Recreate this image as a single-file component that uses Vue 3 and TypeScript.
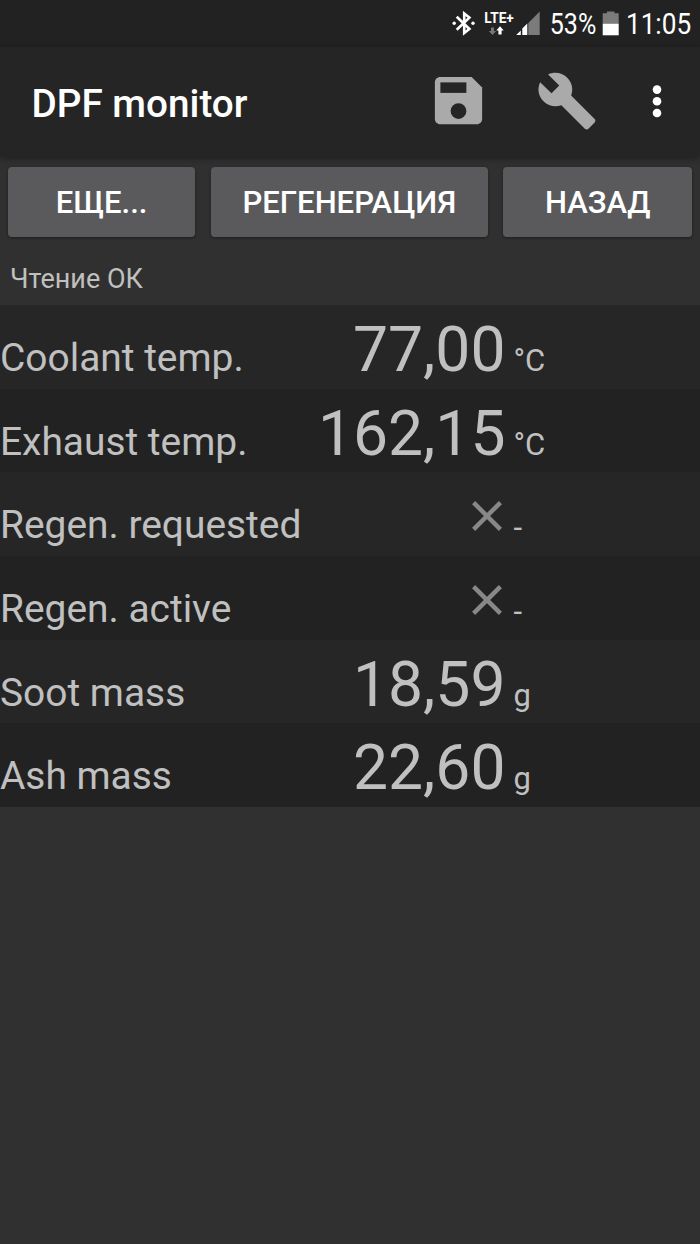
<script setup lang="ts">
interface Reading {
  label: string
  value: string | null
  unit: string
}

const actions: { text: string; kind: string }[] = [
  { text: 'ЕЩЕ...', kind: 'more' },
  { text: 'РЕГЕНЕРАЦИЯ', kind: 'regen' },
  { text: 'НАЗАД', kind: 'back' },
]

const readings: Reading[] = [
  { label: 'Coolant temp.', value: '77,00', unit: '°C' },
  { label: 'Exhaust temp.', value: '162,15', unit: '°C' },
  { label: 'Regen. requested', value: null, unit: '-' },
  { label: 'Regen. active', value: null, unit: '-' },
  { label: 'Soot mass', value: '18,59', unit: 'g' },
  { label: 'Ash mass', value: '22,60', unit: 'g' },
]
</script>

<template>
  <div class="screen">
    <div class="status">
      <svg width="260" height="46" viewBox="0 0 260 46">
        <g fill="none" stroke="#fff" stroke-width="2.6">
          <path d="M16.7 16.8 L29.4 29 L24.2 33 V13.4 L29.4 17.6 L16.7 29.8" />
        </g>
        <circle cx="14.2" cy="23.3" r="1.7" fill="#fff" />
        <circle cx="33" cy="23.3" r="1.7" fill="#fff" />
        <text class="lte" x="44.3" y="22.8" textLength="29.5" lengthAdjust="spacingAndGlyphs">LTE+</text>
        <path d="M51 27.5h3v3.5h2.2l-3.7 4-3.7-4h2.2z" fill="#777" />
        <path d="M60 26.3l3.7 4.2h-2.1v4h-3.2v-4h-2.1z" fill="#fff" />
        <path d="M88.3 35V23l11.4-11.6V35z" fill="#7b7b7b" />
        <path d="M82.3 35V28.4l5-5V35zM76.2 35l4.6-4.6V35z" fill="#fff" />
        <text class="num" x="109.8" y="34.2" textLength="46.5" lengthAdjust="spacingAndGlyphs">53%</text>
        <path d="M162.7 13.2h4.2v-1.6h7.6v1.6h4.2v11h-16z" fill="#7b7b7b" />
        <path d="M162.7 23.8h16V35.3h-16z" fill="#fff" />
        <text class="num" x="185.9" y="34.2" textLength="65.3" lengthAdjust="spacingAndGlyphs">11:05</text>
      </svg>
    </div>
    <header class="bar">
      <h1 class="title">DPF monitor</h1>
      <svg class="save" width="63" height="63" viewBox="0 0 24 24">
        <path fill="#aaa" d="M17 3H5c-1.11 0-2 .9-2 2v14c0 1.1.89 2 2 2h14c1.1 0 2-.9 2-2V7l-4-4z" />
        <circle cx="12" cy="16" r="3" fill="#252525" />
        <path d="M5.1 5.1h9.9v4H5.1z" fill="#252525" />
      </svg>
      <svg class="wrench" width="62" height="62" viewBox="0 0 24 24">
        <path fill="#aaa" d="M22.7 19l-9.1-9.1c.9-2.3.4-5-1.5-6.9-2-2-5-2.4-7.4-1.3L9 6 6 9 1.6 4.7C.4 7.1.9 10.1 2.9 12.1c1.9 1.9 4.6 2.4 6.9 1.5l9.1 9.1c.4.4 1 .4 1.4 0l2.3-2.3c.5-.4.5-1.1.1-1.4z" />
      </svg>
      <svg class="dots" width="12" height="36" viewBox="0 0 12 36">
        <circle v-for="y in [5.6, 17.3, 29]" :key="y" cx="6" :cy="y" r="4.3" fill="#fff" />
      </svg>
    </header>
    <nav class="actions">
      <button v-for="a in actions" :key="a.kind" class="btn" :class="a.kind"><span>{{ a.text }}</span></button>
    </nav>
    <p class="state">Чтение ОК</p>
    <main class="list">
      <div v-for="r in readings" :key="r.label" class="row">
        <span class="label">{{ r.label }}</span>
        <span class="value">
          <template v-if="r.value">{{ r.value }}</template>
          <svg v-else class="cross" width="30" height="30" viewBox="0 0 30 30">
            <path d="M1.6 1.6l26.8 26.8M28.4 1.6L1.6 28.4" stroke="#888" stroke-width="4.4" />
          </svg>
        </span>
        <span class="unit">{{ r.unit }}</span>
      </div>
    </main>
  </div>
</template>

<style>
html,
body {
  margin: 0;
  background: #303030;
}
</style>

<style scoped>
.screen {
  width: 700px;
  height: 1244px;
  overflow: hidden;
  background: #303030;
  font-family: Roboto, "Noto Sans", sans-serif;
  color: #c0c0c0;
}
.status {
  height: 47px;
  background: #222;
  display: flex;
  justify-content: flex-end;
}
.lte {
  font: 700 14px Roboto, sans-serif;
  fill: #fff;
}
.num {
  font: 400 30px Roboto, sans-serif;
  fill: #fff;
}
.bar {
  height: 109px;
  box-sizing: border-box;
  padding: 0 37px 0 31.5px;
  background: #252525;
  box-shadow: 0 2px 7px rgba(0, 0, 0, 0.4);
  display: flex;
  align-items: center;
}
.title {
  margin: 5px auto 0 0;
  font-size: 38.7px;
  line-height: 46px;
  font-weight: 500;
  color: #fff;
}
.save {
  margin: 0 46.5px 2px 0;
}
.wrench {
  margin: 0 52.7px 1px 0;
}
.actions {
  display: grid;
  grid-template-columns: 187.5px 277px 188.5px;
  column-gap: 15.6px;
  padding: 11px 7.8px 0;
}
.btn {
  height: 70px;
  padding: 2px 0 0;
  border: 0;
  border-radius: 4px;
  background: #5a5a5c;
  box-shadow: 0 1px 3px rgba(0, 0, 0, 0.4);
  color: #fff;
  font: 500 31px/68px Roboto, sans-serif;
}
.state {
  margin: 0;
  height: 68px;
  padding: 23px 0 0 10px;
  box-sizing: border-box;
  font-size: 27px;
  line-height: 38px;
}
.row {
  height: 83.67px;
  display: grid;
  grid-template-columns: 310px 195.5px 1fr;
  align-items: baseline;
  overflow: hidden;
  background: #262626;
}
.row:nth-child(even) {
  background: #222;
}
.label {
  font-size: 38.9px;
  line-height: 46px;
  white-space: nowrap;
}
.value {
  font-size: 62.4px;
  line-height: 90.4px;
  text-align: right;
}
.cross {
  vertical-align: 7px;
  margin-right: 4px;
}
.unit {
  padding-left: 8px;
  font-size: 31px;
  line-height: 36px;
}
</style>
